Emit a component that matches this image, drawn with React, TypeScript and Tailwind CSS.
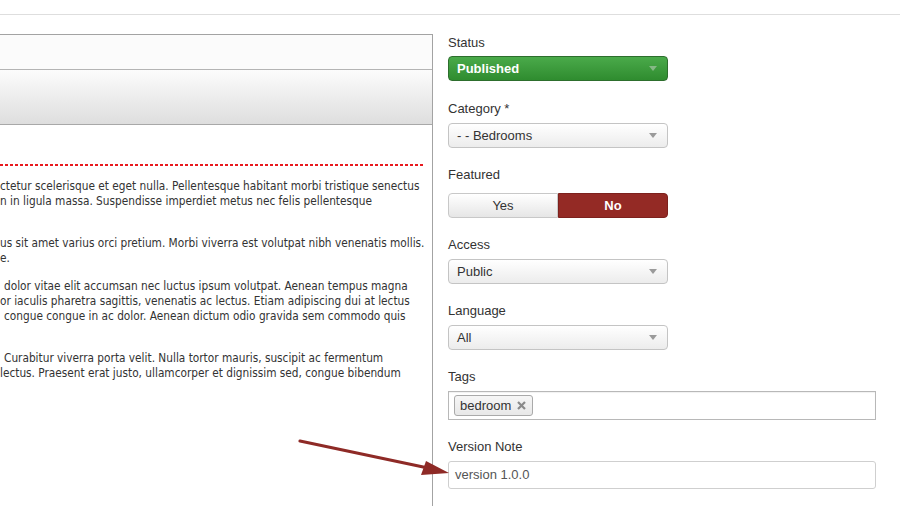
import React from "react";

const Caret = ({ color = "#9a9a9a" }: { color?: string }) => (
  <svg width="8" height="5" viewBox="0 0 8 5" className="shrink-0">
    <path d="M0 0 L8 0 L4 5 Z" fill={color} />
  </svg>
);

const Select = ({ value }: { value: string }) => (
  <div className="flex h-[25px] w-[220px] items-center justify-between rounded-[4px] border border-[#c4c4c4] bg-gradient-to-b from-[#ffffff] to-[#ececec] pl-[8px] pr-[10px] text-[13px] text-[#333]">
    <span>{value}</span>
    <Caret />
  </div>
);

const Label = ({ children, className = "" }: { children: React.ReactNode; className?: string }) => (
  <div className={`h-[20px] leading-[20px] text-[13px] text-[#333] ${className}`}>{children}</div>
);

const lines: { t: string; pl: number; mt: number }[] = [
  { t: "ctetur scelerisque et eget nulla. Pellentesque habitant morbi tristique senectus", pl: 0, mt: 0 },
  { t: "n in ligula massa. Suspendisse imperdiet metus nec felis pellentesque", pl: 0, mt: 0 },
  { t: "", pl: 0, mt: 0 },
  { t: "us sit amet varius orci pretium. Morbi viverra est volutpat nibh venenatis mollis.", pl: 0, mt: 12 },
  { t: "e.", pl: 0, mt: 0 },
  { t: "dolor vitae elit accumsan nec luctus ipsum volutpat. Aenean tempus magna", pl: 4, mt: 13 },
  { t: "or iaculis pharetra sagittis, venenatis ac lectus. Etiam adipiscing dui at lectus", pl: 0, mt: 0 },
  { t: "congue congue in ac dolor. Aenean dictum odio gravida sem commodo quis", pl: 4, mt: 0 },
  { t: "", pl: 0, mt: 0 },
  { t: "Curabitur viverra porta velit. Nulla tortor mauris, suscipit ac fermentum", pl: 4, mt: 12 },
  { t: "lectus. Praesent erat justo, ullamcorper et dignissim sed, congue bibendum", pl: 0, mt: 0 },
];

export default function App() {
  return (
    <div
      className="relative h-[507px] w-[900px] overflow-hidden bg-white"
      style={{ fontFamily: '"Liberation Sans", Arial, sans-serif' }}
    >
      <div className="h-[15px] border-b border-[#dedede]" />
      <div className="flex h-[491px]">
        {/* left panel */}
        <div className="mt-[19px] flex w-[433px] flex-col border-r border-t border-[#a3a3a3]">
          <div className="h-[35px] border-b border-[#b4b4b4] bg-[#fbfbfb]" />
          <div className="h-[55px] border-b border-[#a8a8a8] bg-gradient-to-b from-[#fcfcfc] to-[#dedede]" />
          <div className="pt-[39px]">
            <div className="mr-[7px] h-[2px] bg-[repeating-linear-gradient(to_right,#e8191f_0px,#e8191f_3px,transparent_3px,transparent_5px)]" />
          </div>
          <div
            className="pt-[13px] text-[11.75px] leading-[15px] text-[#333]"
            style={{ fontFamily: '"DejaVu Sans Condensed", "DejaVu Sans", sans-serif' }}
          >
            {lines.map((l, i) => (
              <div
                key={i}
                className="h-[15px] whitespace-nowrap"
                style={{ paddingLeft: l.pl, marginTop: l.mt }}
              >
                {l.t}
              </div>
            ))}
          </div>
        </div>

        {/* right column */}
        <div className="flex flex-col pl-[15px] pt-[18px]">
          <Label>Status</Label>
          <div className="mt-[3px] flex h-[25px] w-[220px] items-center justify-between rounded-[4px] border border-[#2d6e2d] bg-gradient-to-b from-[#4aaa4a] to-[#2f8c2f] pl-[8px] pr-[10px] text-[13px] font-bold text-white">
            <span>Published</span>
            <Caret color="#86b886" />
          </div>

          <Label className="mt-[18px]">Category *</Label>
          <div className="mt-[4px]">
            <Select value="- - Bedrooms" />
          </div>

          <Label className="mt-[17px]">Featured</Label>
          <div className="mt-[8px] flex h-[25px] w-[220px] text-[13px]">
            <div className="flex w-[110px] items-center justify-center rounded-l-[4px] border border-[#c8c8c8] bg-gradient-to-b from-[#ffffff] to-[#e6e6e6] text-[#333]">
              Yes
            </div>
            <div className="flex w-[110px] items-center justify-center rounded-r-[4px] border border-[#7d211d] bg-[#942a25] font-bold text-white">
              No
            </div>
          </div>

          <Label className="mt-[17px]">Access</Label>
          <div className="mt-[4px]">
            <Select value="Public" />
          </div>

          <Label className="mt-[17px]">Language</Label>
          <div className="mt-[4px]">
            <Select value="All" />
          </div>

          <Label className="mt-[17px]">Tags</Label>
          <div className="mt-[4px] flex h-[29px] w-[428px] items-center border border-[#b8b8b8] pl-[5px] shadow-[inset_0_1px_1px_rgba(0,0,0,0.06)]">
            <div className="flex h-[21px] items-center gap-[6px] rounded-[3px] border border-[#aaaaaa] bg-gradient-to-b from-[#f6f6f6] to-[#e8e8e8] pl-[5px] pr-[6px] text-[13px] text-[#333]">
              <span>bedroom</span>
              <svg width="9" height="9" viewBox="0 0 9 9">
                <path d="M1 1 L8 8 M8 1 L1 8" stroke="#8a8a8a" strokeWidth="2.2" />
              </svg>
            </div>
          </div>

          <Label className="mt-[17px]">Version Note</Label>
          <div className="mt-[4px] flex h-[28px] w-[428px] items-center rounded-[3px] border border-[#cfcfcf] pl-[6px] text-[13px] text-[#555]">
            version 1.0.0
          </div>
        </div>
      </div>

      {/* arrow */}
      <svg className="pointer-events-none absolute left-0 top-0" width="900" height="507">
        <line x1="300" y1="441" x2="428" y2="468" stroke="#8e2a26" strokeWidth="3.2" strokeLinecap="round" />
        <path d="M449 473 L421 475 L426 461 Z" fill="#8e2a26" />
      </svg>
    </div>
  );
}
